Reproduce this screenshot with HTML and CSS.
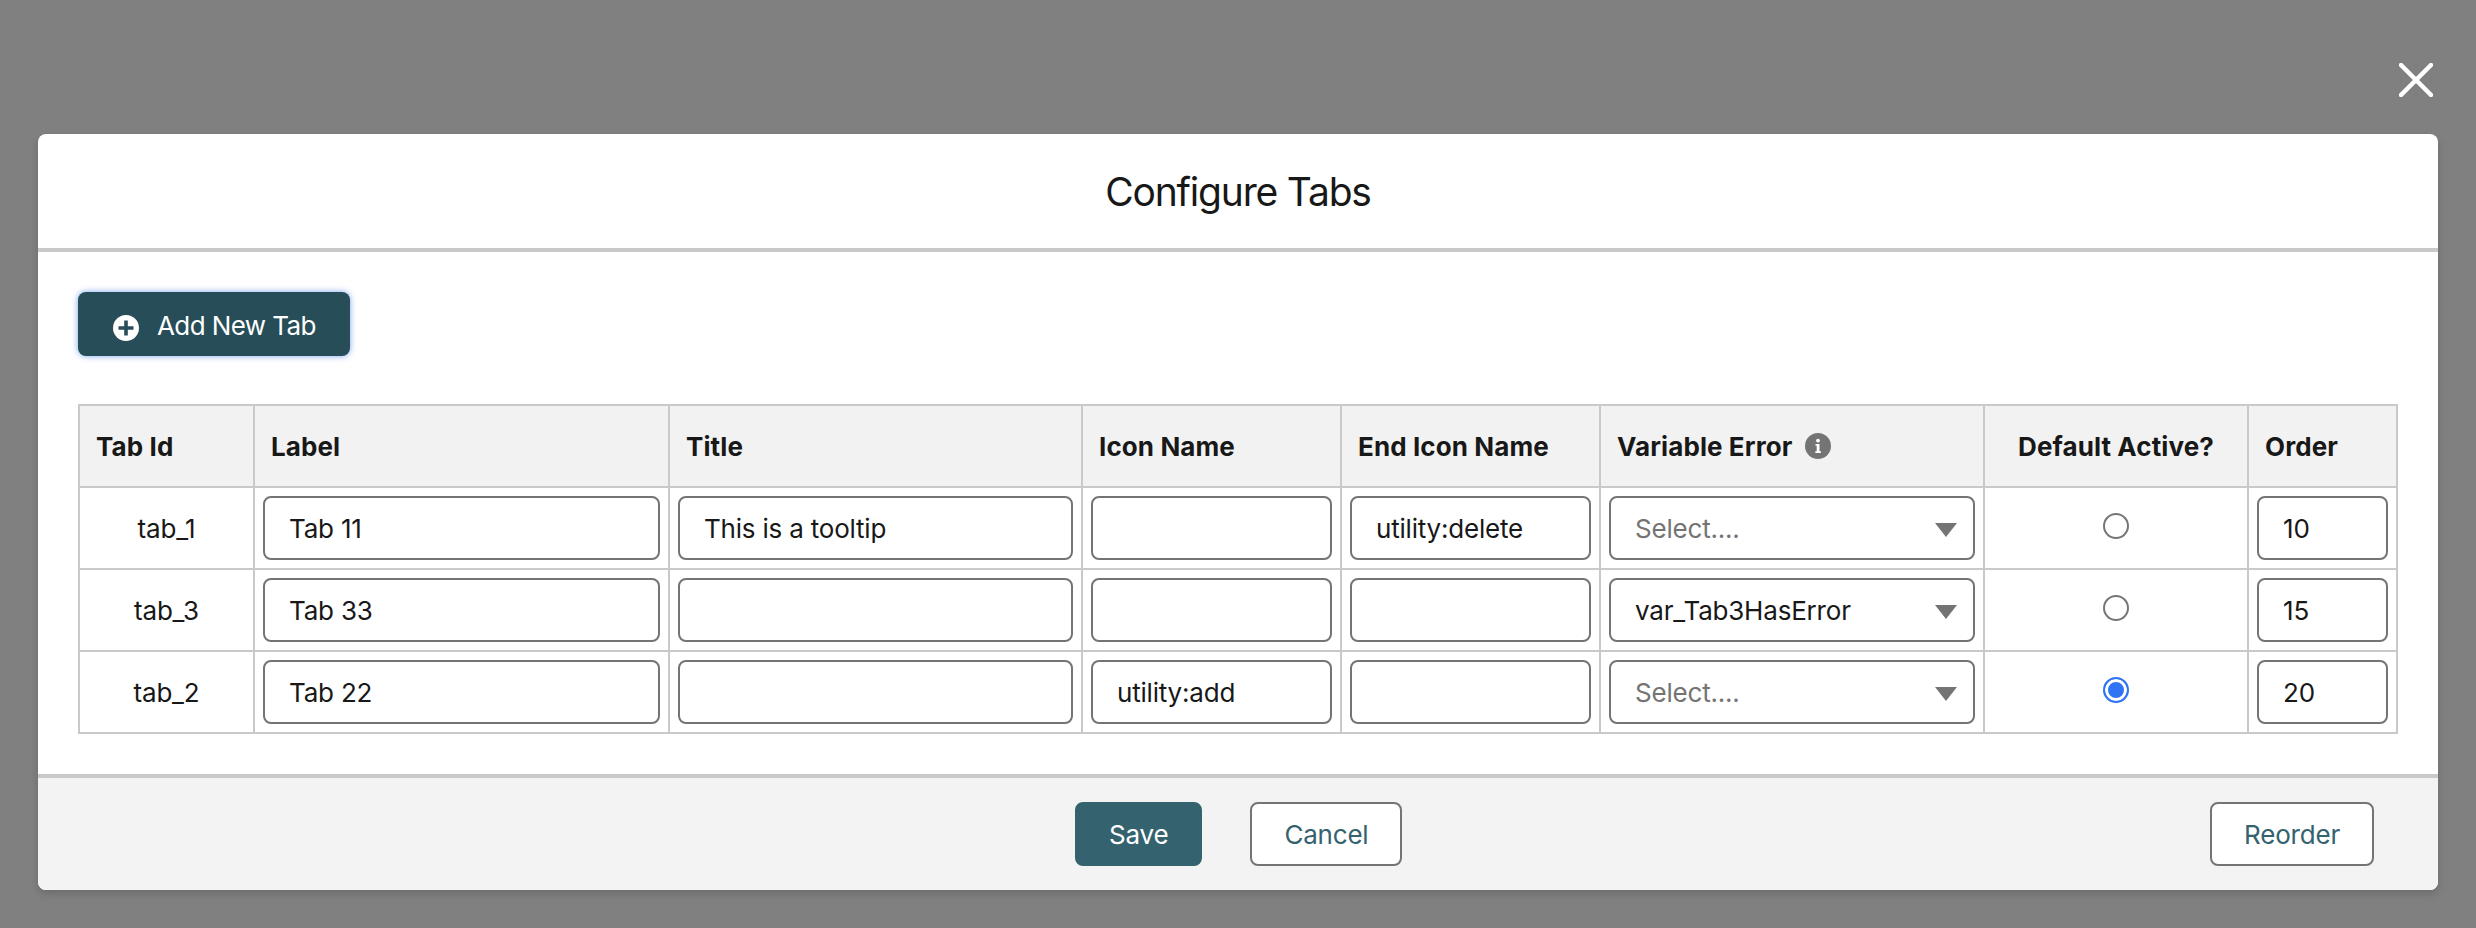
FILE: index.html
```html
<!DOCTYPE html>
<html lang="en">
<head>
    <meta charset="UTF-8">
    <meta name="viewport" content="width=device-width, initial-scale=1.0">
    <title>Configure Tabs</title>
    <link rel="stylesheet" href="styles.css">
</head>
<body>
    <button class="close" aria-label="Close">
        <svg width="34" height="34" viewBox="0 0 34 34"><path d="M2 2 32 32M32 2 2 32" stroke="#fff" stroke-width="4.5" stroke-linecap="round"/></svg>
    </button>

    <div class="modal">
        <h1 class="modal-header">Configure Tabs</h1>

        <div class="modal-body">
            <button class="add-btn">
                <svg width="26" height="26" viewBox="0 0 26 26"><circle cx="13" cy="13" r="13" fill="#fff"/><path d="M13 5.5v15M5.5 13h15" stroke="#264d58" stroke-width="3.6"/></svg>
                Add New Tab
            </button>

            <table class="tabs">
                <colgroup>
                    <col class="c-id"><col class="c-label"><col class="c-title"><col class="c-icon"><col class="c-end">
                    <col class="c-var"><col class="c-def"><col class="c-order">
                </colgroup>
                <thead>
                    <tr>
                        <th>Tab Id</th>
                        <th>Label</th>
                        <th>Title</th>
                        <th>Icon Name</th>
                        <th>End Icon Name</th>
                        <th>
                            <span class="th-info">Variable Error
                                <svg width="26" height="26" viewBox="0 0 26 26"><circle cx="13" cy="13" r="13" fill="#747474"/><circle cx="13" cy="7.6" r="1.9" fill="#fff"/><path d="M10.5 11h4v7.2h1.4v1.8h-5.6v-1.8h1.4v-5.4h-1.2z" fill="#fff"/></svg>
                            </span>
                        </th>
                        <th class="center">Default Active?</th>
                        <th>Order</th>
                    </tr>
                </thead>
                <tbody>
                    <tr>
                        <td class="center">tab_1</td>
                        <td><input type="text" value="Tab 11"></td>
                        <td><input type="text" value="This is a tooltip"></td>
                        <td><input type="text"></td>
                        <td><input type="text" value="utility:delete"></td>
                        <td>
                            <div class="select-wrap">
                                <select class="empty"><option>Select....</option><option>var_Tab3HasError</option></select>
                            </div>
                        </td>
                        <td class="center"><input type="radio" name="def"></td>
                        <td><input type="text" value="10"></td>
                    </tr>
                    <tr>
                        <td class="center">tab_3</td>
                        <td><input type="text" value="Tab 33"></td>
                        <td><input type="text"></td>
                        <td><input type="text"></td>
                        <td><input type="text"></td>
                        <td>
                            <div class="select-wrap">
                                <select><option>var_Tab3HasError</option><option>Select....</option></select>
                            </div>
                        </td>
                        <td class="center"><input type="radio" name="def"></td>
                        <td><input type="text" value="15"></td>
                    </tr>
                    <tr>
                        <td class="center">tab_2</td>
                        <td><input type="text" value="Tab 22"></td>
                        <td><input type="text"></td>
                        <td><input type="text" value="utility:add"></td>
                        <td><input type="text"></td>
                        <td>
                            <div class="select-wrap">
                                <select class="empty"><option>Select....</option><option>var_Tab3HasError</option></select>
                            </div>
                        </td>
                        <td class="center"><input type="radio" name="def" checked></td>
                        <td><input type="text" value="20"></td>
                    </tr>
                </tbody>
            </table>
        </div>

        <div class="modal-footer">
            <div class="footer-main">
                <button class="btn btn-brand">Save</button>
                <button class="btn">Cancel</button>
            </div>
            <button class="btn reorder">Reorder</button>
        </div>
    </div>
</body>
</html>
```

FILE: styles.css
```css
* {
    box-sizing: border-box;
}
html, body {
    height: 100%;
}
body {
    font-family: 'Inter', sans-serif;
    font-size: 26px;
    letter-spacing: -0.2px;
    color: #181818;
    background-color: #808080;
    margin: 0;
    padding: 134px 38px 0;
    overflow: hidden;
}
.close {
    position: absolute;
    top: 63px;
    left: 2399px;
    width: 34px;
    height: 34px;
    padding: 0;
    border: none;
    background: none;
    display: flex;
}
.modal {
    background: white;
    border-radius: 8px;
    box-shadow: 0 4px 8px rgba(0, 0, 0, 0.16);
}
.modal-header {
    margin: 0;
    height: 118px;
    border-bottom: 4px solid #c9c9c9;
    display: flex;
    align-items: center;
    justify-content: center;
    font-size: 39px;
    font-weight: 400;
    letter-spacing: -1.2px;
}
.modal-body {
    height: 522px;
    padding: 40px 40px 0;
}
.add-btn {
    display: flex;
    align-items: center;
    gap: 18px;
    width: 272px;
    height: 64px;
    padding: 2px 0 0 35px;
    font-family: inherit;
    font-size: 26px;
    letter-spacing: -0.6px;
    color: white;
    background-color: #264d58;
    border: none;
    border-radius: 8px;
    box-shadow: 0 0 6px rgba(30, 100, 220, 0.6);
}
.add-btn svg {
    margin-top: 5px;
}
.tabs {
    width: 2318px;
    margin-top: 48px;
    table-layout: fixed;
    border-collapse: collapse;
    border: 2px solid #c9c9c9;
}
.c-id { width: 175px; }
.c-label { width: 415px; }
.c-title { width: 413px; }
.c-icon { width: 259px; }
.c-end { width: 259px; }
.c-var { width: 384px; }
.c-def { width: 264px; }
.c-order { width: 149px; }
th, td {
    border: 2px solid #c9c9c9;
    padding: 0 8px;
    text-align: left;
}
th {
    height: 82px;
    padding: 0 16px;
    font-weight: 700;
    letter-spacing: 0.1px;
    background-color: #f3f2f2;
}
td {
    height: 82px;
}
th.center, td.center {
    text-align: center;
}
.th-info {
    display: flex;
    align-items: center;
    gap: 13px;
}
input[type="text"], select {
    display: block;
    width: 100%;
    height: 64px;
    padding: 0 24px;
    font-family: inherit;
    font-size: 26px;
    letter-spacing: inherit;
    color: #181818;
    background: white;
    border: 2px solid #747474;
    border-radius: 8px;
}
select {
    appearance: none;
}
select.empty {
    color: #747474;
}
.select-wrap {
    position: relative;
}
.select-wrap::after {
    content: "";
    position: absolute;
    top: 27px;
    right: 18px;
    border-left: 11px solid transparent;
    border-right: 11px solid transparent;
    border-top: 14px solid #747474;
}
input[type="radio"] {
    appearance: none;
    display: block;
    width: 26px;
    height: 26px;
    margin: -4px auto 0;
    background: white;
    border: 2px solid #767676;
    border-radius: 50%;
}
input[type="radio"]:checked {
    border-color: #2f74f5;
    background: #2f74f5;
    box-shadow: inset 0 0 0 3px white;
}
.modal-footer {
    height: 116px;
    border-top: 4px solid #c9c9c9;
    border-radius: 0 0 8px 8px;
    background-color: #f3f3f3;
    display: flex;
    align-items: center;
    padding: 0 64px 0 1037px;
}
.footer-main {
    display: flex;
    gap: 48px;
}
.btn {
    height: 64px;
    padding: 0 32px;
    font-family: inherit;
    font-size: 26px;
    letter-spacing: inherit;
    color: #34626f;
    background: white;
    border: 2px solid #747474;
    border-radius: 8px;
}
.btn-brand {
    color: white;
    background-color: #34626f;
    border-color: #34626f;
}
.reorder {
    margin-left: auto;
}
```
